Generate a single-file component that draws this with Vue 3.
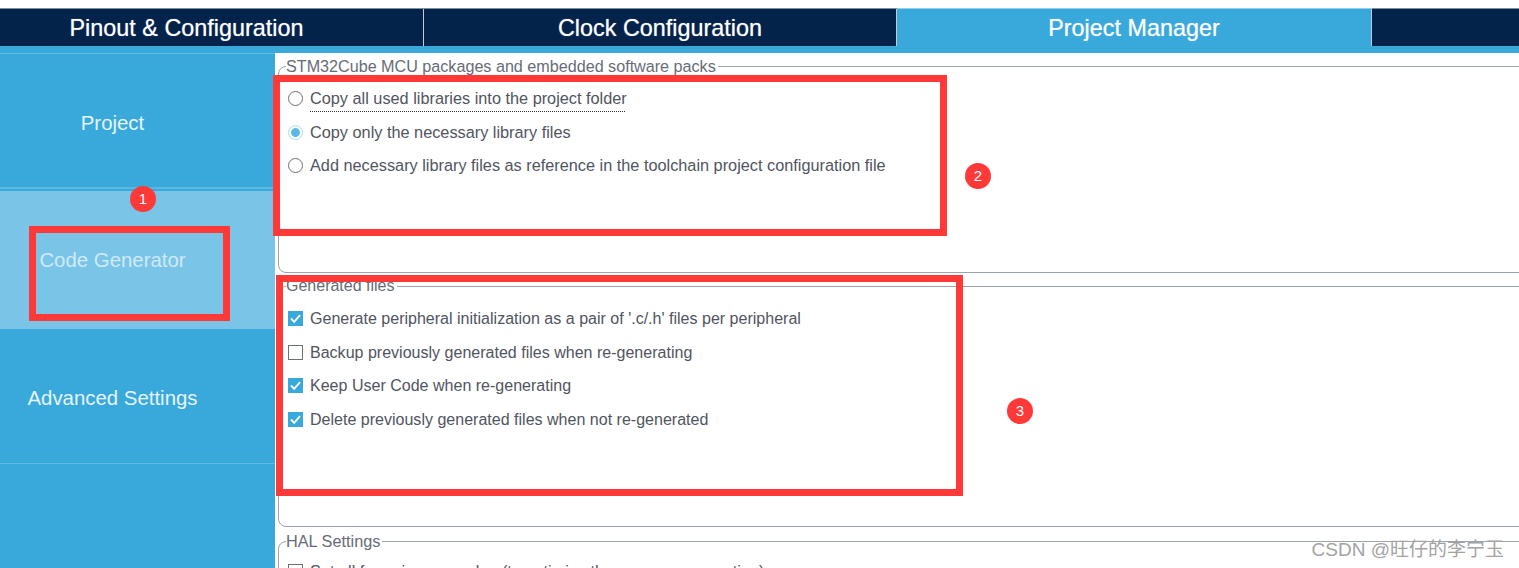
<script setup>
const tabs = [
  { label: 'Pinout & Configuration', width: 424, cls: 'pinout' },
  { label: 'Clock Configuration', width: 473 },
  { label: 'Project Manager', width: 475, active: true }
]

const side = [
  { label: 'Project', cls: 'project' },
  { label: 'Code Generator', cls: 'code' },
  { label: 'Advanced Settings', cls: 'advanced' }
]

const libs = [
  { label: 'Copy all used libraries into the project folder', state: 'off', dotted: true },
  { label: 'Copy only the necessary library files', state: 'on' },
  { label: 'Add necessary library files as reference in the toolchain project configuration file', state: 'off' }
]

const files = [
  { label: "Generate peripheral initialization as a pair of '.c/.h' files per peripheral", on: true },
  { label: 'Backup previously generated files when re-generating', on: false },
  { label: 'Keep User Code when re-generating', on: true },
  { label: 'Delete previously generated files when not re-generated', on: true }
]

const marks = [
  { n: 1, cls: 'm1' },
  { n: 2, cls: 'm2' },
  { n: 3, cls: 'm3' }
]
</script>

<template>
  <div class="page">
    <div class="tabs">
      <div
        v-for="t in tabs"
        :key="t.label"
        class="tab"
        :class="[t.cls, { active: t.active }]"
        :style="{ width: t.width + 'px' }"
      >{{ t.label }}</div>
    </div>
    <div class="strip"></div>

    <div class="main">
      <div class="sidebar">
        <div v-for="s in side" :key="s.label" class="side-item" :class="s.cls">
          <span>{{ s.label }}</span>
        </div>
      </div>

      <div class="content">
        <fieldset class="group first">
          <legend>STM32Cube MCU packages and embedded software packs</legend>
          <div v-for="l in libs" :key="l.label" class="row">
            <span class="radio" :class="l.state"></span>
            <span class="label" :class="{ dotted: l.dotted }">{{ l.label }}</span>
          </div>
        </fieldset>

        <fieldset class="group second">
          <legend>Generated files</legend>
          <div v-for="f in files" :key="f.label" class="row">
            <span class="check" :class="{ on: f.on }">
              <svg v-if="f.on" width="15" height="15" viewBox="0 0 15 15">
                <path d="M3 7.5 L6.2 10.8 L12 4.2" fill="none" stroke="#fff" stroke-width="1.8" />
              </svg>
            </span>
            <span class="label">{{ f.label }}</span>
          </div>
        </fieldset>

        <fieldset class="group third">
          <legend>HAL Settings</legend>
          <div class="row">
            <span class="check"></span>
            <span class="label">Set all free pins as analog (to optimize the power consumption)</span>
          </div>
        </fieldset>
      </div>
    </div>

    <div class="box b1"></div>
    <div class="box b2"></div>
    <div class="box b3"></div>
    <div v-for="m in marks" :key="m.n" class="mark" :class="m.cls">{{ m.n }}</div>
    <div class="watermark">CSDN @旺仔的李宁玉</div>
  </div>
</template>

<style scoped>
.page {
  position: relative;
  width: 1519px;
  height: 568px;
  overflow: hidden;
  background: #fff;
  font-family: "Liberation Sans", Arial, sans-serif;
}

.tabs {
  display: flex;
  height: 38px;
  margin-top: 8px;
  background: #03234b;
  border-top: 1px solid #7f8ea3;
  box-sizing: border-box;
}

.tab {
  box-sizing: border-box;
  display: flex;
  align-items: center;
  justify-content: center;
  padding-top: 1px;
  color: #fff;
  font-size: 23.4px;
  text-shadow: 0 0 1px rgba(255, 255, 255, 0.6);
  border-right: 1px solid #c3ccd6;
}

.tab.pinout {
  padding-right: 50px;
}

.tab.active {
  background: #39a9dc;
  border-top: 1px solid #8fd0ee;
  margin-top: -1px;
  height: 38px;
}

.strip {
  height: 7px;
  background: #39a9dc;
}

.main {
  display: flex;
  height: 515px;
}

.sidebar {
  width: 275px;
  flex: none;
  background: #39a9dc;
  box-sizing: border-box;
}

.side-item {
  display: flex;
  align-items: center;
  justify-content: center;
  padding-right: 50px;
  color: #e6f4fb;
  font-size: 20.4px;
  box-sizing: border-box;
}

.side-item.project {
  height: 136px;
  padding-top: 5px;
  border-top: 1px solid #62bae3;
  border-bottom: 2px solid #5cb8e2;
}

.side-item.code {
  height: 138px;
  margin-top: 2px;
  background: #7ac4e8;
  color: #cfeaf7;
}

.side-item.advanced {
  height: 135px;
  padding-top: 4px;
  border-bottom: 1px solid #62bae3;
}

.content {
  flex: 1;
  min-width: 0;
  padding: 4px 0 0 3px;
  overflow: hidden;
}

.group {
  margin: 0 -20px 0 0;
  padding: 0 0 0 9px;
  border: 1px solid #9aa3ae;
  border-radius: 8px;
  box-sizing: border-box;
  color: #555b66;
}

.group.first {
  height: 216px;
}

.group.second {
  height: 250px;
  margin-top: 4px;
}

.group.third {
  height: 60px;
  margin-top: 5px;
}

legend {
  margin-left: -2px;
  padding: 0 2px 0 0;
  font-size: 16.15px;
  line-height: 18px;
  color: #666c76;
}

.second legend {
  font-size: 16px;
}

.third legend {
  font-size: 16.3px;
}

.row {
  display: flex;
  align-items: center;
  height: 33.7px;
  gap: 7px;
  font-size: 16.3px;
  color: #50555f;
}

.second .row {
  font-size: 16.05px;
}

.first .row:first-of-type,
.second .row:first-of-type {
  margin-top: 6.5px;
}

.third .row {
  margin-top: 5px;
}

.label.dotted {
  text-decoration: underline dotted #333 1px;
  text-underline-offset: 6.5px;
}

.radio {
  width: 15px;
  height: 15px;
  flex: none;
  box-sizing: border-box;
  border-radius: 50%;
  border: 1.6px solid #6b6f76;
  background: #fff;
}

.radio.on {
  border-color: #a8dbf2;
  background: radial-gradient(circle, #5ab8e6 0 4px, #fff 4.8px);
}

.check {
  width: 15px;
  height: 15px;
  flex: none;
  box-sizing: border-box;
  border: 1.6px solid #6b6f76;
  background: #fff;
  display: block;
}

.check.on {
  border: none;
  background: #39a9dc;
}

.check svg {
  display: block;
}

.box {
  position: absolute;
  box-sizing: border-box;
  border: 7px solid #ff3838;
}

.b1 {
  left: 273px;
  top: 75px;
  width: 674px;
  height: 161px;
}

.b2 {
  left: 276px;
  top: 275px;
  width: 687px;
  height: 221px;
}

.b3 {
  left: 29px;
  top: 226px;
  width: 201px;
  height: 95px;
}

.mark {
  position: absolute;
  width: 26px;
  height: 26px;
  border-radius: 50%;
  background: #ff3838;
  color: #fff;
  font-size: 15px;
  line-height: 26px;
  text-align: center;
}

.m1 { left: 130px; top: 186px; }
.m2 { left: 965px; top: 163px; }
.m3 { left: 1007px; top: 398px; }

.watermark {
  position: absolute;
  right: 15px;
  top: 539px;
  font-size: 19px;
  line-height: 22px;
  color: #a3a3a3;
  font-family: "Liberation Sans", "Noto Sans CJK SC", sans-serif;
}
</style>

<style>
body {
  margin: 0;
  background: #fff;
}
</style>
